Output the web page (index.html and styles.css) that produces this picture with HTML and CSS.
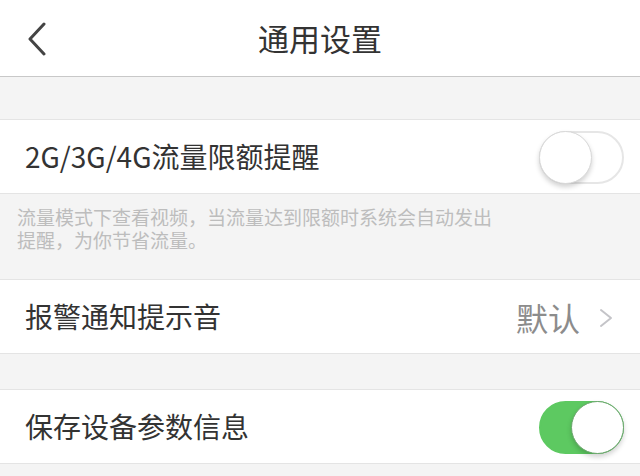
FILE: index.html
```html
<!DOCTYPE html>
<html lang="zh-CN">
<head>
<meta charset="utf-8">
<title>通用设置</title>
<link rel="stylesheet" href="styles.css">
</head>
<body>
<header class="nav">
  <span class="back">
    <svg width="22" height="34" viewBox="0 0 22 34"><path d="M18 2 L4 17 L18 32" fill="none" stroke="#444" stroke-width="3" stroke-linecap="round" stroke-linejoin="round"/></svg>
  </span>
  <h1 class="title">通用设置</h1>
</header>

<section class="group group-first">
  <div class="row">
    <span class="label">2G/3G/4G流量限额提醒</span>
    <span class="switch"><span class="knob"></span></span>
  </div>
</section>
<div class="desc">
  <p class="desc-line">流量模式下查看视频，当流量达到限额时系统会自动发出</p>
  <p class="desc-line">提醒，为你节省流量。</p>
</div>

<section class="group">
  <div class="row">
    <span class="label">报警通知提示音</span>
    <span class="value">默认
      <svg class="chev" width="14" height="20" viewBox="0 0 14 20"><path d="M2 2 L12 10 L2 18" fill="none" stroke="#c4c4c8" stroke-width="2" stroke-linecap="round" stroke-linejoin="round"/></svg>
    </span>
  </div>
</section>

<section class="group group-gap">
  <div class="row">
    <span class="label">保存设备参数信息</span>
    <span class="switch on"><span class="knob"></span></span>
  </div>
</section>
</body>
</html>
```

FILE: styles.css
```css
* { box-sizing: border-box; }
html, body { margin: 0; padding: 0; }
body {
  width: 640px;
  height: 476px;
  overflow: hidden;
  background: #f4f4f4;
  font-family: "Noto Sans CJK SC", "Noto Sans", sans-serif;
  color: #333;
}
.nav {
  height: 77px;
  background: #fff;
  border-bottom: 1px solid #c8c8c8;
  display: flex;
  align-items: center;
  justify-content: center;
  position: relative;
}
.back {
  position: absolute;
  left: 26px;
  top: 22px;
  display: flex;
}
.title {
  margin: 0;
  font-size: 31px;
  font-weight: 400;
  color: #333;
  line-height: 1;
  margin-top: -2px;
}
.group {
  background: #fff;
  border-top: 1px solid #e4e4e4;
  border-bottom: 1px solid #e4e4e4;
}
.group-first { margin-top: 42px; }
.group-gap { margin-top: 35px; }
.row {
  height: 73px;
  display: flex;
  align-items: center;
  justify-content: space-between;
  padding: 0 16px 0 25px;
}
.label {
  font-size: 28px;
  line-height: 1;
  color: #333;
  margin-top: -2px;
}
.desc {
  height: 85px;
  padding: 13px 0 0 17px;
  display: flex;
  flex-direction: column;
  gap: 4px;
}
.desc-line {
  margin: 0;
  font-size: 19px;
  line-height: 19px;
  color: #bdbdbd;
}
.value {
  display: flex;
  align-items: center;
  font-size: 32px;
  line-height: 1;
  color: #8c8c8c;
  gap: 19px;
  margin-right: 11px;
}
.chev { margin-top: 2px; }
.switch {
  width: 85px;
  height: 53px;
  border-radius: 27px;
  background: #fff;
  border: 2px solid #e6e6e6;
  position: relative;
  display: block;
  margin-top: 2px;
}
.knob {
  position: absolute;
  left: -2px;
  top: -2px;
  width: 53px;
  height: 53px;
  border-radius: 50%;
  background: #fff;
  border: 1px solid #d8d8d8;
  box-shadow: 0 3px 5px rgba(0,0,0,0.18);
}
.switch.on {
  background: #5dc961;
  border-color: #5dc961;
}
.switch.on .knob {
  left: auto;
  right: -2px;
  border: 1px solid #6aa56c;
}
```
